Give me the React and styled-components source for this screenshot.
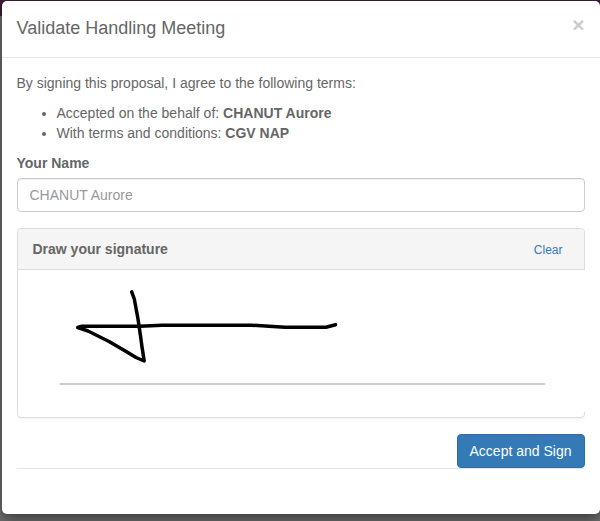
import React, { useState } from 'react'
import styled, { createGlobalStyle } from 'styled-components'


export default function App(){

  const [signed, setSigned] = useState(true)

    return (
      <>
        <GlobalStyle />
        <Backdrop>
          <Modal>
            <Header>
              <Title>Validate Handling Meeting</Title>
              <Close aria-label="Close">×</Close>
            </Header>
            <Body>
              <Text>By signing this proposal, I agree to the following terms:</Text>
              <Terms>
                <li>Accepted on the behalf of: <b>CHANUT Aurore</b></li>
                <li>With terms and conditions: <b>CGV NAP</b></li>
              </Terms>
              <Label htmlFor="name">Your Name</Label>
              <Input id="name" placeholder="CHANUT Aurore" />
              <Panel>
                <PanelHead>
                  <b>Draw your signature</b>
                  <Clear onClick={() => setSigned(false)}>Clear</Clear>
                </PanelHead>
                <Pad>
                  <Signature signed={signed} />
                </Pad>
              </Panel>
              <Actions>
                <Submit>Accept and Sign</Submit>
              </Actions>
            </Body>
          </Modal>
        </Backdrop>
      </>
    );
}

function Signature({ signed }){
  return (
    <svg width="567" height="142" viewBox="18 270 567 142">
      <path d="M59.5 384H545" stroke="#cecece" strokeWidth="2" />
      {signed &&
        <g fill="none" stroke="#000" strokeWidth="3.5" strokeLinecap="round" strokeLinejoin="round">
          <path d="M131.7 291.8L134.3 299L138 319L140.5 336L142 347L144.2 361L136 357.5L127 352L121 348.5L109 341.5L98 336L88 331L78 327.5" />
          <path d="M78 327.5L82 326.2H140L162 325.2H251L269 326.2L285 327.2H326L335.5 324.8" />
        </g>
      }
    </svg>
  )
}

const GlobalStyle = createGlobalStyle`
  * {
    box-sizing: border-box;
  }

  body {
    margin: 0;
    overflow: hidden;
    font-family: "Liberation Sans", Arial, sans-serif;
    font-size: 14px;
    line-height: 20px;
    color: #666;
  }
`

const Backdrop = styled.div`
  height: 521px;
  padding: 1px 0.5px 0 1.5px;
  background: linear-gradient(#3a2033 16px, #707070 16px);
`

const Modal = styled.div`
  height: 513px;
  background-color: #fff;
  border-radius: 5px;
  box-shadow: 0 5px 15px rgba(0, 0, 0, 0.5);
`

const Header = styled.div`
  height: 57px;
  padding: 0 15px;
  display: flex;
  justify-content: space-between;
  border-bottom: 1px solid #e5e5e5;
`

const Title = styled.h4`
  margin: 14px 0 0;
  font-size: 18px;
  font-weight: 400;
  line-height: 26px;
`

const Close = styled.button`
  height: 21px;
  margin-top: 13px;
  padding: 0;
  border: 0;
  background: transparent;
  font-family: inherit;
  font-size: 21px;
  font-weight: 700;
  line-height: 21px;
  color: #ccc;
  cursor: pointer;
`

const Body = styled.div`
  padding: 15px;
`

const Text = styled.p`
  margin: 0 0 10px;
`

const Terms = styled.ul`
  margin: 0 0 10px;
  padding-left: 40px;
`

const Label = styled.label`
  display: block;
  margin-bottom: 5px;
  font-weight: 700;
`

const Input = styled.input`
  display: block;
  width: 100%;
  height: 34px;
  padding: 6px 12px;
  border: 1px solid #ccc;
  border-radius: 4px;
  box-shadow: inset 0 1px 1px rgba(0, 0, 0, 0.075);
  font-family: inherit;
  font-size: 14px;

  &::placeholder {
    color: #999;
  }
`

const Panel = styled.div`
  height: 190px;
  margin: 16px 0;
  border: 1px solid #ddd;
  border-radius: 4px;
  box-shadow: 0 1px 1px rgba(0, 0, 0, 0.05);
`

const PanelHead = styled.div`
  height: 41px;
  padding: 0 21px 0 15px;
  display: flex;
  align-items: center;
  justify-content: space-between;
  background-color: #f5f5f5;
  border-bottom: 1px solid #ddd;
  border-radius: 3px 3px 0 0;
`

const Clear = styled.button`
  padding: 2px 0 0;
  border: 0;
  background: transparent;
  font-family: inherit;
  font-size: 12px;
  line-height: 18px;
  color: #337ab7;
  cursor: pointer;
`

/* one pixel wider than the panel, it hides the right border */
const Pad = styled.div`
  width: 567px;
  height: 142px;
  background-color: #fff;

  svg {
    display: block;
  }
`

const Actions = styled.div`
  height: 35px;
  display: flex;
  align-items: flex-start;
  justify-content: flex-end;
  border-bottom: 1px solid #e5e5e5;
`

const Submit = styled.button`
  width: 128px;
  height: 34px;
  padding: 0;
  border: 1px solid #2e6da4;
  border-radius: 4px;
  background-color: #337ab7;
  font-family: inherit;
  font-size: 14px;
  color: #fff;
  cursor: pointer;
`
